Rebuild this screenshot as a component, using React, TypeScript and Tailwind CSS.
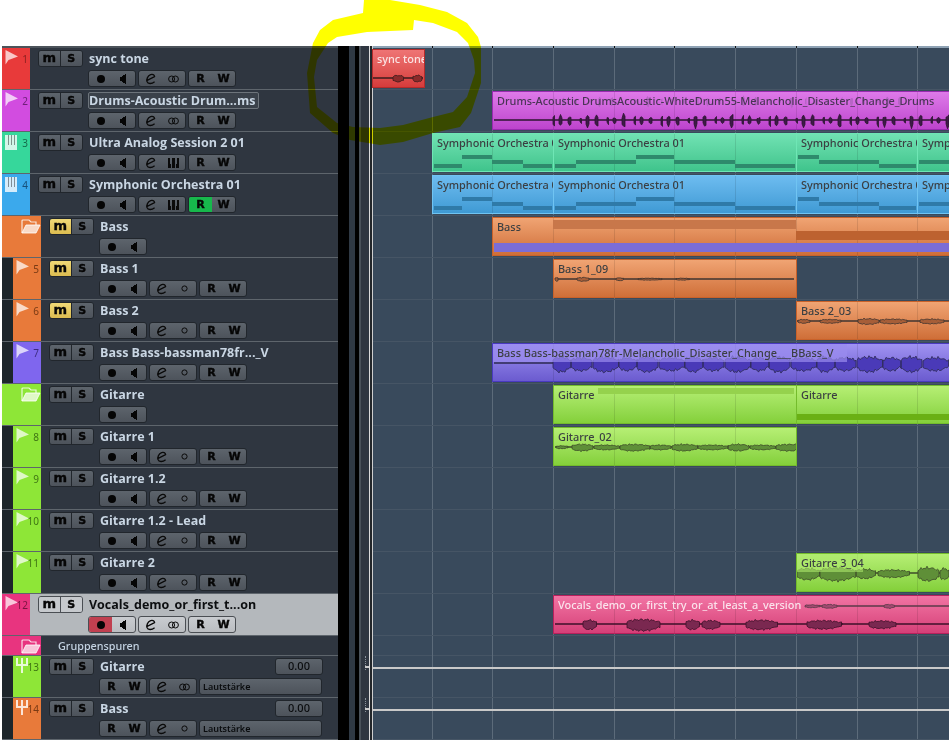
type Kind = 'audio' | 'keys' | 'folder' | 'fx'

interface Track {
  no?: number
  name: string
  kind: Kind
  strip: string
  num?: string
  nested?: boolean
  muted?: boolean
  editing?: boolean
  selected?: boolean
  read?: boolean
  link?: 'link' | 'keys' | 'dot'
}

const tracks: Track[] = [
  { no: 1, name: 'sync tone', kind: 'audio', strip: 'bg-[#e83a3a]', num: 'text-[#8c2020]', link: 'link' },
  { no: 2, name: 'Drums-Acoustic Drum...ms', kind: 'audio', strip: 'bg-[#d24ce0]', num: 'text-[#6e2078]', link: 'link', editing: true },
  { no: 3, name: 'Ultra Analog Session 2 01', kind: 'keys', strip: 'bg-[#36d79b]', num: 'text-[#156a4a]', link: 'keys' },
  { no: 4, name: 'Symphonic Orchestra 01', kind: 'keys', strip: 'bg-[#3ba9ec]', num: 'text-[#174f78]', link: 'keys', read: true },
  { name: 'Bass', kind: 'folder', strip: 'bg-[#e87a3a]', muted: true },
  { no: 5, name: 'Bass 1', kind: 'audio', strip: 'bg-[#e87a3a]', num: 'text-[#7a3a14]', nested: true, muted: true, link: 'dot' },
  { no: 6, name: 'Bass 2', kind: 'audio', strip: 'bg-[#e87a3a]', num: 'text-[#7a3a14]', nested: true, muted: true, link: 'dot' },
  { no: 7, name: 'Bass Bass-bassman78fr..._V', kind: 'audio', strip: 'bg-[#7f66ee]', num: 'text-[#3c2c80]', nested: true, link: 'dot' },
  { name: 'Gitarre', kind: 'folder', strip: 'bg-[#8ee637]' },
  { no: 8, name: 'Gitarre 1', kind: 'audio', strip: 'bg-[#8ee637]', num: 'text-[#3f7414]', nested: true, link: 'dot' },
  { no: 9, name: 'Gitarre 1.2', kind: 'audio', strip: 'bg-[#8ee637]', num: 'text-[#3f7414]', nested: true, link: 'dot' },
  { no: 10, name: 'Gitarre 1.2 - Lead', kind: 'audio', strip: 'bg-[#8ee637]', num: 'text-[#3f7414]', nested: true, link: 'dot' },
  { no: 11, name: 'Gitarre 2', kind: 'audio', strip: 'bg-[#8ee637]', num: 'text-[#3f7414]', nested: true, link: 'dot' },
  { no: 12, name: 'Vocals_demo_or_first_t...on', kind: 'audio', strip: 'bg-[#e8347f]', num: 'text-[#7a1440]', link: 'link', selected: true },
]

const GRID = [432, 492, 553, 614, 674, 735, 796, 857, 917]
const ORIGIN = 373

type Seg = [number, number, number]

interface Wave {
  y: number
  from: number
  to: number
  segs: Seg[]
  line: string
  fill: string
  ghost?: boolean
}

interface Band {
  x: number
  w: number
  y: number
  h: number
  cls: string
}

interface Clip {
  x: number
  w: number
  label: string
  cls: string
  text?: string
  bands?: Band[]
  waves?: Wave[]
  veil?: { w: number; cls: string }
}

const spikes = (start: number, end: number, step: number, amp: number): Seg[] => {
  const out: Seg[] = []
  for (let x = start, i = 0; x < end; x += step + (i % 3) * 3, i++) {
    out.push([x, x + 2 + (i % 3), amp - (i % 4) * 1.2])
  }
  return out
}

const chunks = (start: number, end: number, step: number, amp: number): Seg[] => {
  const out: Seg[] = []
  for (let x = start, i = 0; x < end; x += step + (i % 3) * 4, i++) {
    out.push([x, x + step + (i % 3) * 4, amp - (i % 2)])
  }
  return out
}

const RED = 'border-[#b52b2b] bg-gradient-to-b from-[#ee7474] to-[#d63b3b]'
const PURPLE = 'border-[#9a2ab0] bg-gradient-to-b from-[#de7ae9] to-[#bd43cd]'
const GREEN = 'border-[#6fe6b5] bg-gradient-to-b from-[#70e2b3] to-[#3fc48c]'
const BLUE = 'border-[#70c4f2] bg-gradient-to-b from-[#6dbcf0] to-[#3f9ad4]'
const ORANGE = 'border-[#c9622a] bg-gradient-to-b from-[#f0a473] to-[#cf6f38]'
const VIOLET = 'border-[#4a3ac0] bg-gradient-to-b from-[#a092f2] to-[#6b5bcf]'
const LIME = 'border-[#74bc2c] bg-gradient-to-b from-[#b6ef74] to-[#84d03a]'
const PINK = 'border-[#b8205c] bg-gradient-to-b from-[#f274a4] to-[#d53f78]'

const notesA = [
  { x: 2, w: 28, y: 31, h: 4 },
  { x: 30, w: 30, y: 22, h: 4 },
  { x: 60, w: 31, y: 27, h: 4 },
  { x: 91, w: 29, y: 31, h: 4 },
]
const notesB = [
  { x: 2, w: 21, y: 31, h: 4 },
  { x: 23, w: 60, y: 27, h: 4 },
  { x: 83, w: 38, y: 22, h: 4 },
  { x: 121, w: 61, y: 27, h: 4 },
  { x: 182, w: 60, y: 31, h: 4 },
]
const notesC = [
  { x: 2, w: 21, y: 22, h: 4 },
  { x: 23, w: 60, y: 27, h: 4 },
  { x: 83, w: 37, y: 31, h: 4 },
]

const symphonic = (cls: string, note: string): Clip[] => [
  { x: 432, w: 122, label: 'Symphonic Orchestra 01', cls, bands: notesA.map(n => ({ ...n, cls: note })) },
  { x: 553, w: 244, label: 'Symphonic Orchestra 01', cls, bands: notesB.map(n => ({ ...n, cls: note })) },
  { x: 796, w: 122, label: 'Symphonic Orchestra 01', cls, bands: notesC.map(n => ({ ...n, cls: note })) },
  { x: 917, w: 60, label: 'Symphonic Orchestra 01', cls, bands: [{ x: 2, w: 60, y: 27, h: 4, cls: note }] },
]

// one entry per lane, same order as the track list
const lanes: Clip[][] = [
  [{
    x: 372, w: 53, label: 'sync tone', cls: RED, text: 'text-[#fbe4e4]',
    waves: [{ y: 29, from: 373, to: 423, line: '#3a1c1c', fill: '#8c2a2a', segs: [[393, 404, 3.5], [413, 423, 3.5]] }],
  }],
  [{
    x: 492, w: 480, label: 'Drums-Acoustic DrumsAcoustic-WhiteDrum55-Melancholic_Disaster_Change_Drums', cls: PURPLE, text: 'text-[#4a3456]',
    waves: [
      { y: 10, from: 553, to: 949, line: 'transparent', fill: '#b765c6', segs: spikes(553, 930, 9, 6), ghost: true },
      { y: 29, from: 494, to: 949, line: '#2c1530', fill: '#3e1a48', segs: spikes(553, 949, 6, 7) },
    ],
  }],
  symphonic(GREEN, 'bg-[#2e8a6c]'),
  symphonic(BLUE, 'bg-[#2f7aa8]'),
  [{
    x: 492, w: 480, label: 'Bass', cls: ORANGE,
    bands: [
      { x: 61, w: 243, y: 3, h: 9, cls: 'bg-[#c8774a]' },
      { x: 304, w: 180, y: 14, h: 9, cls: 'bg-[#bd6230]' },
      { x: 2, w: 480, y: 26, h: 9, cls: 'bg-[#7b6dd6]' },
    ],
  }],
  [{
    x: 553, w: 244, label: 'Bass 1_09', cls: ORANGE,
    waves: [{ y: 20, from: 555, to: 794, line: '#3f3530', fill: '#a65e38', segs: [[555, 559, 2], [577, 590, 2], [616, 624, 1.5], [638, 663, 1], [676, 690, 1]] }],
  }],
  [{
    x: 796, w: 180, label: 'Bass 2_03', cls: ORANGE,
    waves: [{ y: 20, from: 797, to: 949, line: '#3f3530', fill: '#a65e38', segs: [[798, 810, 2], [820, 842, 2], [858, 880, 3], [880, 908, 2.5], [920, 945, 2.5]] }],
  }],
  [{
    x: 492, w: 480, label: 'Bass Bass-bassman78fr-Melancholic_Disaster_Change___BBass_V', cls: VIOLET,
    veil: { w: 354, cls: 'bg-[#9a8cee]/70' },
    waves: [{ y: 20, from: 494, to: 553, line: '#2c2a50', fill: '#4a3ab8', segs: chunks(553, 949, 18, 8) }],
  }],
  [
    { x: 553, w: 244, label: 'Gitarre', cls: LIME, bands: [{ x: 45, w: 196, y: 3, h: 6, cls: 'bg-[#95d24d]' }] },
    { x: 796, w: 180, label: 'Gitarre', cls: LIME, bands: [{ x: 1, w: 180, y: 29, h: 6, cls: 'bg-[#6ab014]' }] },
  ],
  [{
    x: 553, w: 244, label: 'Gitarre_02', cls: LIME,
    waves: [{ y: 20, from: 555, to: 794, line: '#3c4a28', fill: '#5f8f38', segs: [[556, 568, 1.5], ...chunks(572, 793, 22, 3.5)] }],
  }],
  [],
  [],
  [{
    x: 796, w: 180, label: 'Gitarre 3_04', cls: LIME,
    veil: { w: 66, cls: 'bg-[#aee96c]/60' },
    waves: [{ y: 20, from: 797, to: 949, line: '#3c4a28', fill: '#5f8f38', segs: [[797, 820, 6], [820, 856, 7], [856, 876, 5], [878, 910, 4], [918, 940, 7], [940, 949, 6]] }],
  }],
  [{
    x: 553, w: 420, label: 'Vocals_demo_or_first_try_or_at_least_a_version', cls: PINK, text: 'text-[#fbe3ec]',
    waves: [
      { y: 11, from: 805, to: 949, line: '#5b3a48', fill: '#a04a70', segs: [[805, 820, 1.5], [822, 838, 2], [884, 895, 2]] },
      { y: 29, from: 555, to: 949, line: '#3c1028', fill: '#7a2850', segs: [[583, 597, 5], [627, 661, 6], [686, 700, 5], [702, 721, 4.5], [746, 778, 5], [807, 842, 4.5], [842, 843, 2], [869, 897, 4]] },
    ],
  }],
]

const wavePath = (segs: Seg[], y: number, offset: number) =>
  segs
    .map(([a, b, amp]) => {
      const top: string[] = []
      const bottom: string[] = []
      for (let x = a; x <= b; x += 1.5) {
        const t = (x - a) / Math.max(b - a, 1)
        const env = Math.pow(Math.sin(Math.PI * Math.min(t + 0.05, 0.95)), 0.35)
        const jit = 0.72 + 0.28 * Math.sin(x * 1.7) * Math.cos(x * 0.6)
        top.push(`${(x - offset).toFixed(1)} ${(y - amp * env * jit).toFixed(1)}`)
        bottom.unshift(`${(x - offset).toFixed(1)} ${(y + amp * env * (2 - jit) * 0.85).toFixed(1)}`)
      }
      return `M${top.join(' L')} L${bottom.join(' L')} Z`
    })
    .join(' ')

function Flag() {
  return (
    <svg width="14" height="16" viewBox="0 0 14 16" className="absolute left-[3px] top-[2px]">
      <path d="M0.5 0 L13 6.5 L3.5 10 L0.5 14.5 Z" fill="#ffffff" fillOpacity="0.72" />
    </svg>
  )
}

function Keys() {
  return (
    <svg width="12" height="15" viewBox="0 0 12 15" className="absolute left-[3px] top-[3px]" shapeRendering="crispEdges">
      <rect x="0" y="0" width="12" height="15" fill="#ffffff" fillOpacity="0.78" />
      <rect x="3" y="0" width="1" height="10" fill="#000000" fillOpacity="0.4" />
      <rect x="6" y="0" width="1" height="10" fill="#000000" fillOpacity="0.4" />
      <rect x="9" y="0" width="1" height="10" fill="#000000" fillOpacity="0.4" />
    </svg>
  )
}

function Folder() {
  return (
    <svg width="20" height="15" viewBox="0 0 20 15" className="absolute left-[19px] top-[3px]">
      <path d="M1 14 L1 2 Q1 1 2 1 L8 1 L10 3 L15 3 L15 6" fill="none" stroke="#ffffff" strokeOpacity="0.8" strokeWidth="1.2" />
      <path d="M1 14 L5 6 L19 6 L15 14 Z" fill="#ffffff" fillOpacity="0.72" stroke="#ffffff" strokeOpacity="0.8" />
    </svg>
  )
}

function Fork() {
  return (
    <svg width="12" height="15" viewBox="0 0 12 15" className="absolute left-[3px] top-[2px]" shapeRendering="crispEdges">
      <path d="M0 0 H2 V6 H5 V0 H7 V6 H10 V0 H12 V8 H7 V15 H5 V8 H0 Z" fill="#ffffff" fillOpacity="0.8" />
    </svg>
  )
}

const RecDot = () => (
  <svg width="10" height="10" viewBox="0 0 10 10"><circle cx="5" cy="5" r="4" fill="#050505" /></svg>
)

const Speaker = () => (
  <svg width="7" height="10" viewBox="0 0 7 10" shapeRendering="crispEdges">
    <path d="M0 3 H2 V2 H3 V1 H5 V0 H6 V10 H5 V9 H3 V8 H2 V7 H0 Z" fill="#050505" />
  </svg>
)

const EIcon = () => (
  <svg width="12" height="12" viewBox="0 0 12 12">
    <path d="M2.2 7.4 L9.6 3.6 C9.4 1.6 7.4 0.9 5.6 1.6 C2.8 2.7 1.2 6.2 2 8.6 C2.8 11 6.6 11.2 9.6 8.8" fill="none" stroke="#0a0a0a" strokeWidth="1.3" />
  </svg>
)

const LinkIcon = () => (
  <svg width="11" height="8" viewBox="0 0 11 8">
    <circle cx="3.6" cy="4" r="3" fill="none" stroke="#0a0a0a" />
    <circle cx="7.4" cy="4" r="3" fill="none" stroke="#0a0a0a" />
  </svg>
)

const DotIcon = () => (
  <svg width="7" height="7" viewBox="0 0 7 7"><circle cx="3.5" cy="3.5" r="2.6" fill="none" stroke="#0a0a0a" /></svg>
)

const KeysIcon = () => (
  <svg width="11" height="10" viewBox="0 0 11 10" shapeRendering="crispEdges">
    <path d="M0 0 H2 V6 H3 V10 H0 Z M4 0 H7 V10 H4 Z M9 0 H11 V10 H8 V6 H9 Z" fill="#0a0a0a" />
  </svg>
)

const glyph = "font-['DejaVu_Sans',sans-serif] font-bold text-[#060606] leading-none [-webkit-text-stroke:0.4px_#060606]"
const nameFont = "font-['Open_Sans',sans-serif] text-[12.5px] font-bold"

function Group({ children, light }: { children: React.ReactNode; light?: boolean }) {
  return (
    <div
      className={`grid h-[17px] w-[48px] grid-cols-2 items-center justify-items-center overflow-hidden rounded-[3px] border ${
        light
          ? 'border-[#4a4e53] bg-gradient-to-b from-[#c9ccd0] to-[#babdc1]'
          : 'border-[#21262c] bg-gradient-to-b from-[#5d646c] to-[#4d535b]'
      }`}
    >
      {children}
    </div>
  )
}

function MuteSolo({ muted, light }: { muted?: boolean; light?: boolean }) {
  return (
    <div
      className={`grid h-[17px] w-[45px] shrink-0 grid-cols-2 overflow-hidden rounded-[3px] border ${
        light ? 'border-[#4a4e53]' : 'border-[#21262c]'
      }`}
    >
      <div
        className={`flex items-center justify-center border-r pb-[2px] ${glyph} text-[13px] ${
          light
            ? 'border-[#4a4e53] bg-[#c6c9cd]'
            : muted
              ? 'border-[#21262c] bg-gradient-to-b from-[#f0d976] to-[#dcbc50]'
              : 'border-[#21262c] bg-gradient-to-b from-[#5d646c] to-[#4d535b]'
        }`}
      >
        m
      </div>
      <div
        className={`flex items-center justify-center ${glyph} text-[11px] ${
          light ? 'bg-[#c6c9cd]' : 'bg-gradient-to-b from-[#5d646c] to-[#4d535b]'
        }`}
      >
        S
      </div>
    </div>
  )
}

function TrackRow({ t }: { t: Track }) {
  const folder = t.kind === 'folder'
  return (
    <div className={`flex h-[42px] border-b border-[#5e656c] ${t.selected ? 'bg-[#b4b8bc]' : ''}`}>
      {t.nested && <div className="w-[11px] shrink-0 bg-[#1e262b]" />}
      <div className={`relative shrink-0 ${t.strip} ${folder ? 'w-[39px]' : 'w-[28px]'}`}>
        {t.kind === 'audio' && <Flag />}
        {t.kind === 'keys' && <Keys />}
        {folder && <Folder />}
        {t.no && (
          <span className={`absolute right-[2px] top-[6px] font-['Noto_Sans',sans-serif] text-[10px] leading-none ${t.num}`}>
            {t.no}
          </span>
        )}
      </div>
      <div className="min-w-0 flex-1 pl-[8px] pt-[2px]">
        <div className="flex h-[17px] items-center">
          <MuteSolo muted={t.muted} light={t.selected} />
          <div
            className={`ml-[5px] flex h-[17px] items-center whitespace-nowrap rounded-[2px] border pr-[3px] pt-[1px] ${nameFont} ${
              t.editing ? 'border-[#6d747b] bg-[#3a414a]' : 'border-transparent'
            } ${t.selected ? 'text-[#0c0e10]' : 'text-[#c9d6e3]'}`}
          >
            {t.name}
          </div>
        </div>
        <div className="ml-[50px] mt-[3px] flex gap-[2px]">
          <Group light={t.selected}>
            <span className={`flex h-full w-full items-center justify-center ${t.selected ? 'bg-[#c04050]' : ''}`}>
              <RecDot />
            </span>
            <Speaker />
          </Group>
          {!folder && (
            <>
              <Group light={t.selected}>
                <EIcon />
                {t.link === 'link' ? <LinkIcon /> : t.link === 'keys' ? <KeysIcon /> : <DotIcon />}
              </Group>
              <Group light={t.selected}>
                <span className={`flex h-full w-full items-center justify-center text-[11px] ${glyph} ${t.read ? 'bg-[#17b84c]' : ''}`}>R</span>
                <span className={`text-[11px] ${glyph}`}>W</span>
              </Group>
            </>
          )}
        </div>
      </div>
    </div>
  )
}

function FxRow({ no, name, strip, num, dot }: { no: number; name: string; strip: string; num: string; dot?: boolean }) {
  return (
    <div className="flex h-[42px] border-b border-[#5e656c]">
      <div className="w-[11px] shrink-0 bg-[#1e262b]" />
      <div className={`relative w-[28px] shrink-0 ${strip}`}>
        <Fork />
        <span className={`absolute right-[2px] top-[6px] font-['Noto_Sans',sans-serif] text-[10px] leading-none ${num}`}>{no}</span>
      </div>
      <div className="min-w-0 flex-1 pl-[8px] pt-[2px]">
        <div className="flex h-[17px] items-center">
          <MuteSolo />
          <div className={`ml-[6px] flex-1 whitespace-nowrap pt-[1px] text-[#c9d6e3] ${nameFont}`}>{name}</div>
          <div className="mr-[15px] flex h-[17px] w-[48px] items-center justify-center rounded-[3px] border border-[#21262c] bg-gradient-to-b from-[#5d646c] to-[#4d535b] font-['Noto_Sans',sans-serif] text-[11px] font-medium text-[#0a0c0e]">
            0.00
          </div>
        </div>
        <div className="ml-[50px] mt-[3px] flex gap-[2px]">
          <Group>
            <span className={`text-[11px] ${glyph}`}>R</span>
            <span className={`text-[11px] ${glyph}`}>W</span>
          </Group>
          <Group>
            <EIcon />
            {dot ? <DotIcon /> : <LinkIcon />}
          </Group>
          <div className="flex h-[17px] w-[123px] items-center rounded-[3px] border border-[#21262c] bg-gradient-to-b from-[#5d646c] to-[#4d535b] pl-[3px] font-['Noto_Sans',sans-serif] text-[9px] font-semibold text-[#0a0c0e]">
            Lautstärke
          </div>
        </div>
      </div>
    </div>
  )
}

function ClipView({ c }: { c: Clip }) {
  return (
    <div
      className={`absolute top-[1px] h-[39px] overflow-hidden border ${c.cls}`}
      style={{ left: c.x - ORIGIN, width: c.w }}
    >
      {GRID.filter(g => g > c.x && g < c.x + c.w).map(g => (
        <div key={g} className="absolute bottom-0 top-0 w-px bg-black/10" style={{ left: g - c.x - 1 }} />
      ))}
      {c.bands?.map((b, i) => (
        <div key={i} className={`absolute ${b.cls}`} style={{ left: b.x - 1, top: b.y - 1, width: b.w, height: b.h }} />
      ))}
      {c.waves?.map((w, i) => (
        <svg key={i} className="absolute left-0 top-[-1px]" width={c.w} height="39">
          {w.line !== 'transparent' && (
            <line x1={w.from - c.x - 1} x2={w.to - c.x - 1} y1={w.y} y2={w.y} stroke={w.line} strokeWidth="1.6" />
          )}
          <path d={wavePath(w.segs, w.y, c.x + 1)} fill={w.fill} stroke={w.ghost ? 'none' : w.line} strokeWidth="0.8" />
        </svg>
      ))}
      {c.veil && <div className={`absolute left-0 top-0 h-[18px] ${c.veil.cls}`} style={{ width: c.veil.w }} />}
      <div className={`absolute left-[4px] top-[1px] whitespace-nowrap font-['Noto_Sans',sans-serif] text-[10.9px] font-medium leading-[16px] ${c.text ?? 'text-[#3b3f42]'}`}>
        {c.label}
      </div>
    </div>
  )
}

function FxLane() {
  return (
    <div className="relative h-[42px] border-b border-[#465565]">
      <div className="absolute left-0 right-0 top-[11px] h-[2px] bg-[#c9c9c9]" />
    </div>
  )
}

export default function App() {
  return (
    <div className="relative h-[740px] w-[949px] overflow-hidden bg-white">
      <div className="h-[46px]" />
      <div className="flex h-[694px]">
        <div className="w-[2px] shrink-0 bg-white" />
        <div className="w-[336px] shrink-0 bg-[#2f3640]">
          <div className="h-[2px] bg-[#4c535a]" />
          {tracks.map(t => (
            <TrackRow key={t.name} t={t} />
          ))}
          <div className="flex h-[20px] border-b border-[#5e656c]">
            <div className="relative w-[39px] shrink-0 bg-[#e8347f]">
              <Folder />
            </div>
            <div className="pl-[17px] font-['Noto_Sans',sans-serif] text-[10.8px] font-medium leading-[20px] text-[#c4d3e2]">Gruppenspuren</div>
          </div>
          <FxRow no={13} name="Gitarre" strip="bg-[#8ee637]" num="text-[#3f7414]" />
          <FxRow no={14} name="Bass" strip="bg-[#e87a3a]" num="text-[#7a3a14]" dot />
        </div>

        {/* divider between track list and event display */}
        <div className="w-[11px] shrink-0 bg-black" />
        <div className="w-[6px] shrink-0 bg-[#2f3944]" />
        <div className="w-[4px] shrink-0 bg-black" />
        <div className="w-[2px] shrink-0 bg-[#4a525a]" />
        <div className="relative w-[8px] shrink-0 bg-[#2f3640]">
          <div className="absolute left-[4px] top-[610px] h-[14px] border-l border-dotted border-[#8a929a]" />
          <div className="absolute left-[4px] top-[652px] h-[14px] border-l border-dotted border-[#8a929a]" />
          <div className="absolute left-[4px] right-0 top-[620px] h-[2px] bg-[#c9c9c9]" />
          <div className="absolute left-[4px] right-0 top-[662px] h-[2px] bg-[#c9c9c9]" />
        </div>
        <div className="w-px shrink-0 bg-[#dcdcdc]" />
        <div className="w-[2px] shrink-0 bg-[#22262a]" />
        <div className="w-px shrink-0 bg-[#cfcfcf]" />

        <div className="relative min-w-0 flex-1 bg-[#394a5c]">
          <div className="h-[2px] bg-[#8ea2b4]" />
          {GRID.map(g => (
            <div key={g} className="absolute bottom-0 top-0 w-px bg-[#5c6b7a]" style={{ left: g - ORIGIN }}>
              <div className="h-[2px] bg-[#111111]" />
            </div>
          ))}
          {lanes.map((clips, i) => (
            <div key={i} className="relative h-[42px] border-b border-[#465565]">
              {clips.map(c => (
                <ClipView key={c.x} c={c} />
              ))}
            </div>
          ))}
          <div className="h-[20px] border-b border-[#465565]" />
          <FxLane />
          <FxLane />
        </div>
      </div>

      {/* marker scribble drawn over the screenshot */}
      <svg className="pointer-events-none absolute left-0 top-0 mix-blend-multiply" width="949" height="740">
        <path
          fill="#ffff00"
          fillRule="evenodd"
          strokeLinejoin="round"
          d="M364 0 L390 0 L420 5 L447 12 L467 23 L478 37 L481 47 L481 83 L471 113 L460 127 L433 133 L403 142 L380 145 L350 140 L333 133 L310 113 L307 73 L313 43 L320 30 L333 20 L363 13 Z M414 20 L433 23 L457 32 L468 43 L474 60 L475 73 L467 97 L453 112 L433 117 L403 125 L380 128 L353 127 L337 123 L317 107 L314 77 L317 60 L328 43 L337 37 L367 32 L413 30 Z"
        />
      </svg>
    </div>
  )
}
